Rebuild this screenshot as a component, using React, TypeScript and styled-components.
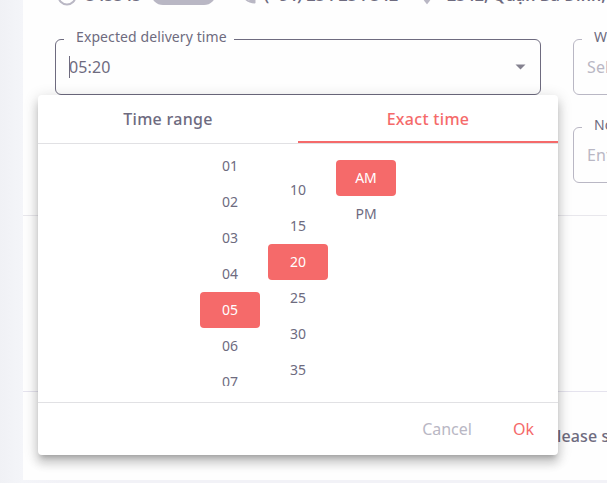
import React from 'react';
import styled, { createGlobalStyle } from 'styled-components';

const ink = '#6e6b7f';
const muted = '#b9b7c4';
const accent = '#f56a6a';

const GlobalStyle = createGlobalStyle`
  * { box-sizing: border-box; }
  html, body { margin: 0; width: 607px; height: 483px; overflow: hidden; }
  body { font-family: 'Noto Sans', sans-serif; color: ${ink}; background: #f3f4f8; }
`;

const Page = styled.main`
  position: relative;
  width: 607px;
  height: 483px;
  padding-left: 23px;
  overflow: hidden;
  background: linear-gradient(90deg, #f0f1f5 0, #f4f5f9 23px, #f2f2f7 60px);
`;

const Card = styled.section`
  display: flow-root;
  width: 900px;
  height: 480px;
  background: #fefefe;
`;

const ContactBar = styled.header`
  display: flex;
  align-items: center;
  height: 24px;
  margin-top: -16px;
  padding-left: 34px;
  font-size: 16px;
  font-weight: 600;
  letter-spacing: .1px;
  line-height: 24px;
  white-space: nowrap;
  svg { flex: none; fill: ${muted}; }
`;

const ContactText = styled.span<{ $width: number; $gap: number }>`
  flex: none;
  width: ${p => p.$width}px;
  margin: -2px 0 0 ${p => p.$gap}px;
`;

const Chip = styled.span`
  flex: none;
  width: 65px;
  height: 24px;
  margin: -6px 22px 0 0;
  border-radius: 12px;
  background: ${muted};
`;

const FormGrid = styled.div`
  display: grid;
  grid-template-columns: 486px 300px;
  grid-template-rows: 65px 65px;
  gap: 23px 32px;
  padding: 22px 0 0 32px;
`;

const Field = styled.fieldset<{ $active?: boolean }>`
  min-width: 0;
  height: 65px;
  margin: 0;
  padding: 0 0 0 8px;
  border: 1px solid ${p => (p.$active ? ink : muted)};
  border-radius: 6px;
`;

const Legend = styled.legend<{ $width: number }>`
  width: ${p => p.$width}px;
  height: 18px;
  padding: 0 0 0 12px;
  font-size: 14px;
  letter-spacing: .1px;
  line-height: 14px;
  white-space: nowrap;
`;

const FieldBody = styled.div<{ $placeholder?: boolean }>`
  display: flex;
  align-items: center;
  height: 22px;
  margin-top: 8px;
  padding: 0 14px 0 5px;
  font-size: 16px;
  letter-spacing: .15px;
  color: ${p => (p.$placeholder ? muted : ink)};
  svg { margin-left: auto; fill: #84818f; }
`;

const Caret = styled.i`
  width: 1px;
  height: 22px;
  margin-right: -1px;
  background: ${ink};
`;

const EmptySection = styled.div`
  height: 177px;
  margin-top: 32px;
  border-top: 1px solid #e8e7ec;
  border-bottom: 1px solid #e5e3ee;
`;

const Notice = styled.p`
  margin: 0;
  padding: 32px 0 0 524px;
  font-size: 16px;
  font-weight: 500;
  letter-spacing: .15px;
  line-height: 24px;
  white-space: nowrap;
`;

const Menu = styled.div`
  position: absolute;
  top: 95px;
  left: 38px;
  width: 520px;
  height: 360px;
  display: flex;
  flex-direction: column;
  border-radius: 4px;
  overflow: hidden;
  background: #fff;
  box-shadow: 0 5px 5px -3px rgba(0, 0, 0, .2), 0 8px 10px 1px rgba(0, 0, 0, .14), 0 3px 14px 2px rgba(0, 0, 0, .12);
`;

const Tabs = styled.div`
  display: grid;
  grid-template-columns: 1fr 1fr;
  height: 49px;
  border-bottom: 1px solid #e1e1e4;
`;

const Tab = styled.button<{ $active?: boolean }>`
  height: 48px;
  padding: 2px 0 0;
  border: 0;
  border-bottom: 2px solid ${p => (p.$active ? accent : 'transparent')};
  background: none;
  font: 500 16px/24px 'Noto Sans', sans-serif;
  letter-spacing: .3px;
  color: ${p => (p.$active ? accent : ink)};
`;

const Picker = styled.div`
  display: flex;
  justify-content: center;
  gap: 8px;
  height: 258px;
  padding: 16px 0;
`;

const Column = styled.div<{ $shift?: number }>`
  width: 60px;
  height: 226px;
  overflow: hidden;
  &::before { content: ''; display: block; margin-top: ${p => p.$shift ?? 0}px; }
`;

const Option = styled.div<{ $selected?: boolean }>`
  height: 36px;
  border-radius: 4px;
  background: ${p => (p.$selected ? accent : 'transparent')};
  color: ${p => (p.$selected ? '#fff' : ink)};
  font-size: 14px;
  line-height: 36px;
  text-align: center;
`;

const Footer = styled.footer`
  display: flex;
  justify-content: flex-end;
  align-items: center;
  gap: 41px;
  height: 53px;
  padding-right: 24px;
  border-top: 1px solid #e1e1e4;
`;

const TextButton = styled.button<{ $primary?: boolean }>`
  padding: 0;
  border: 0;
  background: none;
  font: 400 16px/24px 'Noto Sans', sans-serif;
  color: ${p => (p.$primary ? accent : muted)};
`;

const hours = ['01', '02', '03', '04', '05', '06', '07'];
const minutes = ['10', '15', '20', '25', '30', '35'];

export default function App() {
  return (
    <Page>
      <GlobalStyle />
      <Card>
        <ContactBar>
          <svg width="20" height="20" viewBox="0 0 20 20">
            <circle cx="10" cy="10" r="8.5" fill="none" stroke={muted} strokeWidth="2" />
          </svg>
          <ContactText $width={65} $gap={9}>345345</ContactText>
          <Chip />
          <svg width="20" height="20" viewBox="0 0 24 24">
            <path d="M6.6 10.8c1.4 2.8 3.8 5.1 6.6 6.6l2.2-2.2c.3-.3.7-.4 1-.2 1.1.4 2.3.6 3.6.6.6 0 1 .4 1 1V20c0 .6-.4 1-1 1C10.6 21 3 13.4 3 4c0-.6.5-1 1-1h3.5c.6 0 1 .4 1 1 0 1.3.2 2.5.6 3.6.1.3 0 .7-.2 1z" />
          </svg>
          <ContactText $width={153} $gap={6}>(+84) 234 234 342</ContactText>
          <svg width="20" height="20" viewBox="0 0 24 24">
            <path d="M12 2C8.1 2 5 5.1 5 9c0 5.250 7 13 7 13s7-7.750 7-13c0-3.900-3.100-7-7-7z" />
          </svg>
          <ContactText $width={300} $gap={10}>2342, Quận Ba Đình, Hà Nội</ContactText>
        </ContactBar>
        <FormGrid>
          <Field $active>
            <Legend $width={170}>Expected delivery time</Legend>
            <FieldBody>
              <Caret />05:20
              <svg width="11" height="6" viewBox="0 0 11 6"><path d="M.5.5h10l-5 5z" /></svg>
            </FieldBody>
          </Field>
          <Field>
            <Legend $width={120}>Warehouse</Legend>
            <FieldBody $placeholder>Select warehouse</FieldBody>
          </Field>
          <div />
          <Field>
            <Legend $width={80}>Note</Legend>
            <FieldBody $placeholder>Enter note</FieldBody>
          </Field>
        </FormGrid>
        <EmptySection />
        <Notice>Please select</Notice>
      </Card>
      <Menu>
        <Tabs>
          <Tab>Time range</Tab>
          <Tab $active>Exact time</Tab>
        </Tabs>
        <Picker>
          <Column $shift={-12}>
            {hours.map(h => <Option key={h} $selected={h === '05'}>{h}</Option>)}
          </Column>
          <Column $shift={12}>
            {minutes.map(m => <Option key={m} $selected={m === '20'}>{m}</Option>)}
          </Column>
          <Column>
            <Option $selected>AM</Option>
            <Option>PM</Option>
          </Column>
        </Picker>
        <Footer>
          <TextButton>Cancel</TextButton>
          <TextButton $primary>Ok</TextButton>
        </Footer>
      </Menu>
    </Page>
  );
}
